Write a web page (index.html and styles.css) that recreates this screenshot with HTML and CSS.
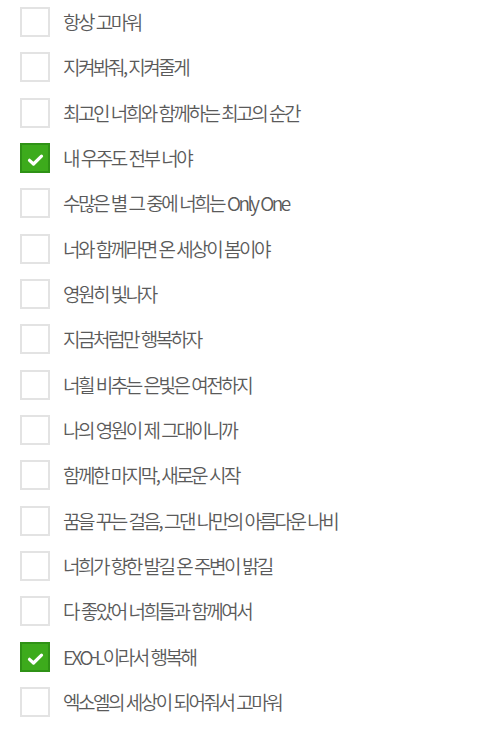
FILE: index.html
```html
<!DOCTYPE html>
<html lang="ko">
<head>
<meta charset="utf-8">
<link rel="stylesheet" href="styles.css">
</head>
<body>
<ul class="list">
  <li class="item"><span class="box"></span><span class="label">항상 고마워</span></li>
  <li class="item"><span class="box"></span><span class="label">지켜봐줘, 지켜줄게</span></li>
  <li class="item"><span class="box"></span><span class="label">최고인 너희와 함께하는 최고의 순간</span></li>
  <li class="item"><span class="box checked"><svg viewBox="0 0 26 26" class="tick"><path d="M7.5 15.3 L11.5 19 L19.5 11.2" /></svg></span><span class="label">내 우주도 전부 너야</span></li>
  <li class="item"><span class="box"></span><span class="label">수많은 별 그 중에 너희는 Only One</span></li>
  <li class="item"><span class="box"></span><span class="label">너와 함께라면 온 세상이 봄이야</span></li>
  <li class="item"><span class="box"></span><span class="label">영원히 빛나자</span></li>
  <li class="item"><span class="box"></span><span class="label">지금처럼만 행복하자</span></li>
  <li class="item"><span class="box"></span><span class="label">너흴 비추는 은빛은 여전하지</span></li>
  <li class="item"><span class="box"></span><span class="label">나의 영원이 제 그대이니까</span></li>
  <li class="item"><span class="box"></span><span class="label">함께한 마지막, 새로운 시작</span></li>
  <li class="item"><span class="box"></span><span class="label">꿈을 꾸는 걸음, 그댄 나만의 아름다운 나비</span></li>
  <li class="item"><span class="box"></span><span class="label">너희가 향한 발길 온 주변이 밝길</span></li>
  <li class="item"><span class="box"></span><span class="label">다 좋았어 너희들과 함께여서</span></li>
  <li class="item"><span class="box checked"><svg viewBox="0 0 26 26" class="tick"><path d="M7.5 15.3 L11.5 19 L19.5 11.2" /></svg></span><span class="label">EXO-L이라서 행복해</span></li>
  <li class="item"><span class="box"></span><span class="label">엑소엘의 세상이 되어줘서 고마워</span></li>
</ul>
</body>
</html>
```
FILE: styles.css
```css
html, body {
  margin: 0;
  padding: 0;
  background: #ffffff;
}
.list {
  list-style: none;
  margin: 0;
  padding: 7px 0 0 20px;
  display: flex;
  flex-direction: column;
  gap: 15.33px;
}
.item {
  display: flex;
  align-items: center;
  height: 30px;
  gap: 13px;
}
.box {
  box-sizing: border-box;
  width: 30px;
  height: 30px;
  border: 2px solid #e3e3e3;
  background: #fff;
  flex: none;
  display: flex;
  align-items: center;
  justify-content: center;
}
.box.checked {
  background: #3dab1c;
  border-color: #2f9216;
}
.tick {
  width: 26px;
  height: 26px;
  display: block;
}
.tick path {
  fill: none;
  stroke: #fff;
  stroke-width: 3.2;
  stroke-linecap: round;
  stroke-linejoin: round;
}
.label {
  font-family: "Noto Sans CJK KR", "Noto Sans", sans-serif;
  font-size: 19px;
  font-weight: 350;
  letter-spacing: -2.5px;
  color: #5a5a5a;
  line-height: 30px;
}
```
